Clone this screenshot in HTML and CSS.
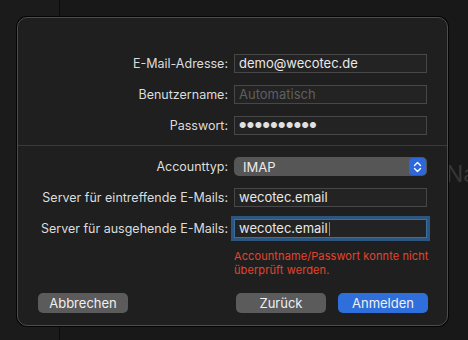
FILE: index.html
```html
<!DOCTYPE html>
<html lang="de">
<head>
    <meta charset="UTF-8">
    <meta name="viewport" content="width=device-width, initial-scale=1.0">
    <title>Account hinzufügen</title>
    <link rel="stylesheet" href="styles.css">
</head>
<body>
    <!-- window content behind the sheet -->
    <div class="backdrop">
        <div class="sidebar"></div>
        <div class="main">
            <div class="ghost">Name</div>
        </div>
    </div>

    <!-- account sheet -->
    <div class="sheet">
        <div class="form">
            <label class="lbl">E-Mail-Adresse:</label>
            <div class="field">demo@wecotec.de</div>

            <label class="lbl">Benutzername:</label>
            <div class="field placeholder">Automatisch</div>

            <label class="lbl">Passwort:</label>
            <div class="field dots">●●●●●●●●●●</div>
        </div>

        <div class="divider"></div>

        <div class="form">
            <label class="lbl">Accounttyp:</label>
            <div class="popup">
                <span>IMAP</span>
                <span class="stepper">
                    <svg width="9" height="12" viewBox="0 0 9 12">
                        <path d="M1.5 4.5 L4.5 1.5 L7.5 4.5 M1.5 7.5 L4.5 10.5 L7.5 7.5" fill="none" stroke="#fff" stroke-width="1.4" stroke-linecap="round" stroke-linejoin="round"/>
                    </svg>
                </span>
            </div>

            <label class="lbl">Server für eintreffende E-Mails:</label>
            <div class="field">wecotec.email</div>

            <label class="lbl">Server für ausgehende E-Mails:</label>
            <div class="field focused">wecotec.email<span class="caret"></span></div>

            <span></span>
            <div class="error">Accountname/Passwort konnte nicht<br>überprüft werden.</div>
        </div>

        <div class="buttons">
            <button class="btn">Abbrechen</button>
            <span class="spacer"></span>
            <button class="btn">Zurück</button>
            <button class="btn btn-primary">Anmelden</button>
        </div>
    </div>
</body>
</html>
```

FILE: styles.css
```css
* {
    box-sizing: border-box;
}
html, body {
    margin: 0;
    height: 100%;
}
body {
    background-color: #181818;
    font-family: Inter, "Noto Sans", sans-serif;
    font-size: 12.5px;
    color: #dedede;
    overflow: hidden;
}
.backdrop {
    display: flex;
    height: 100%;
}
.sidebar {
    flex-shrink: 0;
    width: 60px;
    border-right: 1px solid #0c0c0c;
    background-color: #1b1b1b;
}
.main {
    flex: 1;
    min-width: 0;
    overflow: hidden;
    padding: 160px 0 0 386px;
}
.ghost {
    font-size: 23px;
    color: #363636;
    white-space: nowrap;
}
.sheet {
    position: absolute;
    left: 17px;
    top: 17px;
    width: 431px;
    height: 309px;
    background-color: #1f1f1f;
    border: 1px solid #4c4c4c;
    border-radius: 10px;
    box-shadow: 0 0 0 1px #050505;
    padding-top: 36px;
}
.form {
    display: grid;
    grid-template-columns: 1fr 193px;
    column-gap: 6px;
    row-gap: 12px;
    padding: 0 20px 0 20px;
    align-items: center;
}
.lbl {
    text-align: right;
    white-space: nowrap;
    color: #dcdcdc;
}
.field {
    height: 19px;
    line-height: 17px;
    padding: 0 4px;
    background-color: #232323;
    border: 1px solid #474747;
    color: #e8e8e8;
    font-size: 13px;
    white-space: nowrap;
}
.placeholder {
    color: #5f5f5f;
}
.dots {
    font-size: 8px;
    letter-spacing: 0.5px;
    color: #e0e0e0;
}
.focused {
    box-shadow: 0 0 0 3px #2c5680;
    border-color: #3b6fa0;
}
.caret {
    display: inline-block;
    width: 1px;
    height: 14px;
    margin-left: 1px;
    vertical-align: -3px;
    background-color: #4e8ff0;
}
.divider {
    height: 1px;
    background-color: #393939;
    margin: 10px 0 11px;
}
.popup {
    height: 19px;
    display: flex;
    align-items: center;
    justify-content: space-between;
    padding: 0 1px 0 9px;
    background-color: #565656;
    border-radius: 5px;
    color: #ececec;
    font-size: 13px;
}
.stepper {
    width: 17px;
    height: 17px;
    border-radius: 4px;
    background-color: #2d67dc;
    display: flex;
    align-items: center;
    justify-content: center;
}
.error {
    color: #e2452e;
    font-size: 11px;
    line-height: 14px;
    margin-top: -1px;
    white-space: nowrap;
    letter-spacing: 0.1px;
}
.buttons {
    display: flex;
    gap: 12px;
    padding: 16px 19px 0 20px;
}
.spacer {
    flex: 1;
}
.btn {
    width: 90px;
    height: 20px;
    border: none;
    border-radius: 5px;
    background-color: #5b5b5b;
    color: #f0f0f0;
    font-family: Inter, "Noto Sans", sans-serif;
    font-size: 13px;
    padding: 0;
}
.btn-primary {
    background-color: #2e6fdc;
}
```
